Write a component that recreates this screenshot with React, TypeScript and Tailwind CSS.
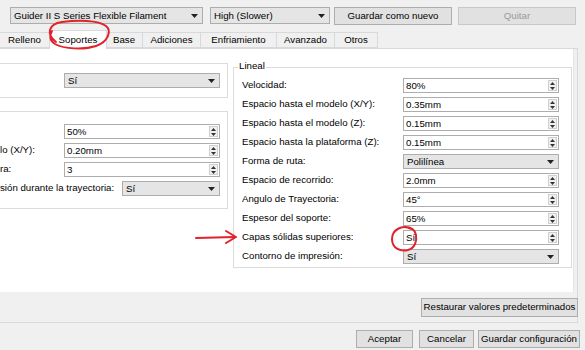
import React from "react";

const font = "font-['Liberation_Sans',Arial,sans-serif]";

function Spin() {
  return (
    <div className="flex h-[11px] w-[9px] flex-col items-center justify-center gap-[2px] border border-[#d0d0d0] bg-[#f0f0f0]">
      <svg width="5" height="3" viewBox="0 0 5 3">
        <path d="M0 3L2.5 0L5 3Z" fill="#333" />
      </svg>
      <svg width="5" height="3" viewBox="0 0 5 3">
        <path d="M0 0L2.5 3L5 0Z" fill="#333" />
      </svg>
    </div>
  );
}

function SpinField({ value, className = "" }: { value: string; className?: string }) {
  return (
    <div className={`flex h-[15px] items-center border border-[#adadad] bg-white pl-[2px] pr-[1px] ${className}`}>
      <span className="flex-1 whitespace-nowrap leading-none">{value}</span>
      <Spin />
    </div>
  );
}

function Combo({ value, className = "" }: { value: string; className?: string }) {
  return (
    <div className={`flex h-[15px] items-center border border-[#adadad] bg-[#e5e5e5] pl-[3px] pr-[4px] ${className}`}>
      <span className="flex-1 whitespace-nowrap leading-none">{value}</span>
      <svg width="7" height="4" viewBox="0 0 7 4">
        <path d="M0 0H7L3.5 4Z" fill="#222" />
      </svg>
    </div>
  );
}

function Button({ label, className = "" }: { label: string; className?: string }) {
  return (
    <div className={`flex h-[18px] items-center justify-center whitespace-nowrap border border-[#adadad] bg-[#e1e1e1] ${className}`}>
      {label}
    </div>
  );
}

const tabs = [
  { name: "Relleno", w: "w-[50px]" },
  { name: "Soportes", w: "w-[58px]" },
  { name: "Base", w: "w-[37px]" },
  { name: "Adiciones", w: "w-[58px]" },
  { name: "Enfriamiento", w: "w-[76px]" },
  { name: "Avanzado", w: "w-[58px]" },
  { name: "Otros", w: "w-[43px]" },
];

const lineal: { label: string; value: string; combo?: boolean }[] = [
  { label: "Velocidad:", value: "80%" },
  { label: "Espacio hasta el modelo (X/Y):", value: "0.35mm" },
  { label: "Espacio hasta el modelo (Z):", value: "0.15mm" },
  { label: "Espacio hasta la plataforma (Z):", value: "0.15mm" },
  { label: "Forma de ruta:", value: "Polilínea", combo: true },
  { label: "Espacio de recorrido:", value: "2.0mm" },
  { label: "Angulo de Trayectoria:", value: "45°" },
  { label: "Espesor del soporte:", value: "65%" },
  { label: "Capas sólidas superiores:", value: "Sí" },
  { label: "Contorno de impresión:", value: "Sí", combo: true },
];

export default function App() {
  return (
    <div className={`relative h-[350px] w-[585px] overflow-hidden bg-[#f0f0f0] text-[9.7px] text-black ${font}`}>
      {/* top toolbar */}
      <div className="flex gap-[6px] pl-[10px] pt-[7px]">
        <Combo value="Guider II S Series Flexible Filament" className="h-[17px] w-[193px]" />
        <Combo value="High (Slower)" className="ml-[1px] h-[17px] w-[120px]" />
        <Button label="Guardar como nuevo" className="-ml-[2px] h-[17px] w-[118px]" />
        <Button label="Quitar" className="h-[17px] w-[118px] border-[#c8c8c8] bg-[#cccccc] text-[#9a9a9a]" />
      </div>

      {/* tabs */}
      <div className="mt-[7px] flex h-[16px] items-end">
        {tabs.map((t) =>
          t.name === "Soportes" ? (
            <div
              key={t.name}
              className={`relative z-10 -mx-[1px] -mb-[1px] flex h-[19px] items-center justify-center border border-b-0 border-[#d9d9d9] bg-white ${t.w}`}
            >
              {t.name}
            </div>
          ) : (
            <div
              key={t.name}
              className={`flex h-[16px] items-center justify-center border border-l-0 border-[#d9d9d9] bg-[#f0f0f0] ${t.w}`}
            >
              {t.name}
            </div>
          )
        )}
      </div>

      {/* pane */}
      <div className="flex h-[275px] w-[578px] flex-col border-b border-r border-t border-[#d9d9d9]">
        <div className="flex h-[243px] bg-white">
          <div className="flex w-[573px] gap-[5px] bg-white">
            {/* left column (scrolled out of view) */}
            <div className="flex w-[228px] flex-col pt-[14px]">
              <div className="flex h-[35px] items-center border-b border-r border-t border-[#dcdcdc] pr-[7px]">
                <Combo value="Sí" className="ml-[64px] flex-1" />
              </div>
              <div className="mt-[13px] flex h-[98px] flex-col border-b border-r border-t border-[#dcdcdc] pr-[7px] pt-[10px]">
                <div className="flex h-[19px] items-center">
                  <SpinField value="50%" className="ml-[64px] flex-1" />
                </div>
                <div className="flex h-[19px] items-center">
                  <span className="w-[64px] whitespace-nowrap">lo (X/Y):</span>
                  <SpinField value="0.20mm" className="flex-1" />
                </div>
                <div className="flex h-[19px] items-center">
                  <span className="w-[64px] whitespace-nowrap">ra:</span>
                  <SpinField value="3" className="flex-1" />
                </div>
                <div className="flex h-[19px] items-center">
                  <span className="w-[122px] whitespace-nowrap">sión durante la trayectoria:</span>
                  <Combo value="Sí" className="flex-1" />
                </div>
              </div>
            </div>

            {/* right column */}
            <div className="flex w-[339px] flex-col pt-[11px]">
              <div className="relative mt-[7px] flex flex-col border border-[#dcdcdc] px-[8px] pb-[1px] pt-[8px]">
                <span className="absolute -top-[9px] left-[4px] bg-white px-[1px]">Lineal</span>
                {lineal.map((r) => (
                  <div key={r.label} className="flex h-[19px] items-center">
                    <span className="w-[161px] whitespace-nowrap">{r.label}</span>
                    {r.combo ? (
                      <Combo value={r.value} className="w-[156px]" />
                    ) : (
                      <SpinField value={r.value} className="w-[156px]" />
                    )}
                  </div>
                ))}
              </div>
            </div>
          </div>
          <div className="flex-1 border-l border-[#e6e6e6] bg-[#f0f0f0]" />
        </div>
        <div className="flex flex-1 items-center justify-end">
          <Button label="Restaurar valores predeterminados" className="mr-[-1px] h-[19px] w-[157px]" />
        </div>
      </div>

      {/* dialog buttons */}
      <div className="mt-[7px] flex justify-end gap-[6px] pr-[5px]">
        <Button label="Aceptar" className="h-[18px] w-[57px] border-[#0078d7]" />
        <Button label="Cancelar" className="h-[18px] w-[55px]" />
        <Button label="Guardar configuración" className="-ml-[2px] h-[18px] w-[102px]" />
      </div>

      {/* red annotations */}
      <svg className="pointer-events-none absolute left-0 top-0 z-20" width="585" height="350">
        <path
          d="M56 42 C46 34 48 24 62 22 C78 20 98 20 106 26 C112 31 108 42 96 46 C84 50 64 49 55 44 C50 41 49 36 52 31"
          fill="none"
          stroke="#e0242b"
          strokeWidth="2"
          strokeLinecap="round"
        />
        <path d="M196 238 L235 237" stroke="#e0242b" strokeWidth="2" fill="none" strokeLinecap="round" />
        <path d="M226 231 L236 237 L226 243" stroke="#e0242b" strokeWidth="2" fill="none" strokeLinecap="round" strokeLinejoin="round" />
        <path
          d="M411 229 C402 224 392 230 392 239 C392 248 400 252 408 250 C415 248 417 241 416 235 C415 230 411 227 405 227"
          fill="none"
          stroke="#e0242b"
          strokeWidth="2"
          strokeLinecap="round"
        />
      </svg>
    </div>
  );
}
